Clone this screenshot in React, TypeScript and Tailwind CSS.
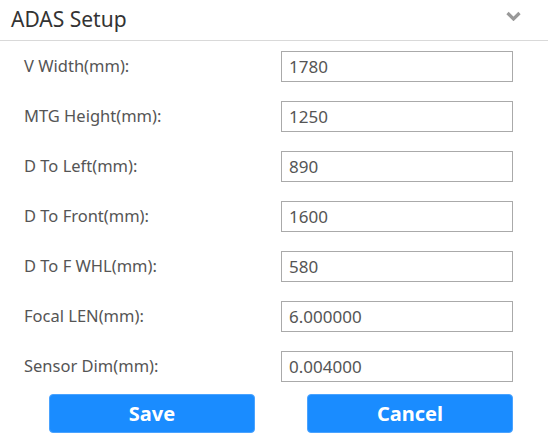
import React from "react";

const rows: [string, string][] = [
  ["V Width(mm):", "1780"],
  ["MTG Height(mm):", "1250"],
  ["D To Left(mm):", "890"],
  ["D To Front(mm):", "1600"],
  ["D To F WHL(mm):", "580"],
  ["Focal LEN(mm):", "6.000000"],
  ["Sensor Dim(mm):", "0.004000"],
];

export default function App() {
  return (
    <div
      className="w-[548px] h-[440px] bg-white overflow-hidden"
      style={{ fontFamily: '"Noto Sans", "Open Sans", sans-serif' }}
    >
      <div className="h-[41px] border-b border-[#d9d9d9] flex items-center justify-between pl-[11px] pr-[27px]">
        <span className="text-[21px] text-[#333] leading-none mb-[2px]">ADAS Setup</span>
        <svg width="15" height="10" viewBox="0 0 15 10" className="mb-[8px]">
          <path d="M1.5 2 L7.5 8 L13.5 2" fill="none" stroke="#999" strokeWidth="3.2" />
        </svg>
      </div>
      <div className="flex flex-col gap-[19px] pt-[10px]">
        {rows.map(([label, value]) => (
          <div key={label} className="flex items-center h-[31px]">
            <div className="w-[281px] pl-[24px] text-[16.5px] text-[#555]">{label}</div>
            <div className="w-[232px] h-[31px] border border-[#aaa] flex items-center pl-[7px] text-[17px] text-[#555]">
              {value}
            </div>
          </div>
        ))}
      </div>
      <div className="flex pt-[12px] pl-[49px] gap-[52px]">
        <button className="w-[206px] h-[39px] rounded-[4px] bg-[#1a8cff] border border-[#4aa3ff] text-white font-bold text-[20px]">
          Save
        </button>
        <button className="w-[206px] h-[39px] rounded-[4px] bg-[#1a8cff] border border-[#4aa3ff] text-white font-bold text-[20px]">
          Cancel
        </button>
      </div>
    </div>
  );
}
